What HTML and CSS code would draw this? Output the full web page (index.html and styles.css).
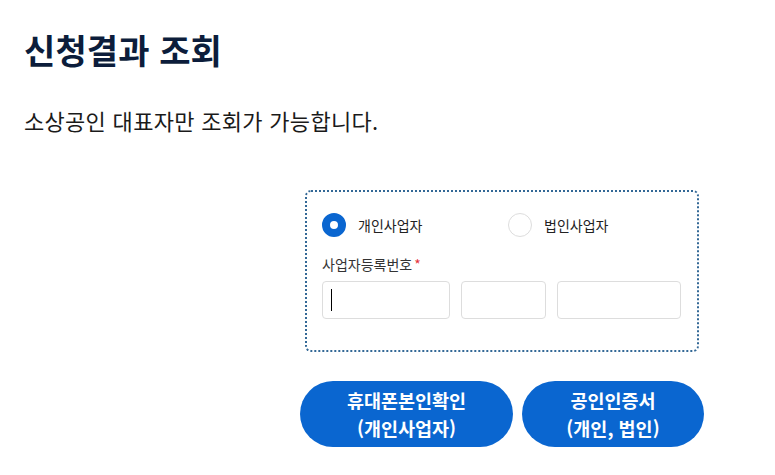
FILE: index.html
```html
<!DOCTYPE html>
<html lang="ko">
<head>
    <meta charset="UTF-8">
    <meta name="viewport" content="width=device-width, initial-scale=1.0">
    <title>신청결과 조회</title>
    <link rel="stylesheet" href="styles.css">
</head>
<body>
    <div class="container">
        <h2 class="title">신청결과 조회</h2>
        <p class="desc">소상공인 대표자만 조회가 가능합니다.</p>

        <div class="form-area">
            <div class="form-box">
                <div class="radio-row">
                    <label class="radio-item">
                        <span class="radio checked"></span>
                        <span>개인사업자</span>
                    </label>
                    <label class="radio-item">
                        <span class="radio"></span>
                        <span>법인사업자</span>
                    </label>
                </div>
                <div class="field-label">사업자등록번호<span class="req">*</span></div>
                <div class="inputs">
                    <div class="input first"><span class="caret"></span></div>
                    <div class="input second"></div>
                    <div class="input third"></div>
                </div>
            </div>
            <div class="buttons">
                <button class="btn btn-phone">휴대폰본인확인<br>(개인사업자)</button>
                <button class="btn btn-cert">공인인증서<br>(개인, 법인)</button>
            </div>
        </div>
    </div>
</body>
</html>
```

FILE: styles.css
```css
* {
    padding: 0;
    margin: 0;
    box-sizing: border-box;
    font-family: "Noto Sans CJK KR", "Noto Sans", sans-serif;
}

body {
    background: #fff;
    color: #111;
}

.container {
    width: 775px;
    padding: 24px 0 0 24px;
}

.title {
    font-size: 34px;
    font-weight: 700;
    color: #0c1d3b;
    line-height: 52px;
    letter-spacing: 0.1px;
}

.desc {
    margin-top: 29px;
    font-size: 22px;
    color: #1a1a1a;
    line-height: 30px;
    letter-spacing: 0.3px;
}

.form-area {
    margin: 55px 0 0 276px;
    width: 410px;
}

.form-box {
    margin-left: 5px;
    width: 394px;
    height: 162px;
    border: 2px dotted #336896;
    border-radius: 6px;
    padding: 20px 15px 0 15px;
}

.radio-row {
    display: grid;
    grid-template-columns: 186px 1fr;
    align-items: center;
    height: 26px;
}

.radio-item {
    display: flex;
    align-items: center;
    gap: 12px;
    font-size: 14px;
    color: #222;
}

.radio {
    width: 24px;
    height: 24px;
    border-radius: 50%;
    border: 1px solid #ddd;
    background: #fff;
}

.radio.checked {
    border: 8px solid #0a66d0;
}

.field-label {
    margin-top: 16px;
    font-size: 14px;
    color: #333;
    line-height: 20px;
}

.req {
    color: #e5323c;
    margin-left: 2px;
}

.inputs {
    display: flex;
    gap: 11px;
    margin-top: 7px;
}

.input {
    height: 38px;
    border: 1px solid #ddd;
    border-radius: 4px;
    background: #fff;
    display: flex;
    align-items: center;
    padding-left: 8px;
}

.input.first { width: 128px; }
.input.second { width: 85px; }
.input.third { width: 124px; }

.caret {
    width: 1px;
    height: 22px;
    background: #000;
}

.buttons {
    display: flex;
    gap: 9px;
    margin-top: 29px;
}

.btn {
    height: 66px;
    border: none;
    border-radius: 33px;
    background: #0a66d0;
    color: #fff;
    font-size: 18.5px;
    font-weight: 700;
    line-height: 28px;
    font-family: "Noto Sans CJK KR", "Noto Sans", sans-serif;
}

.btn-phone { width: 213px; }
.btn-cert { width: 182px; }
```
